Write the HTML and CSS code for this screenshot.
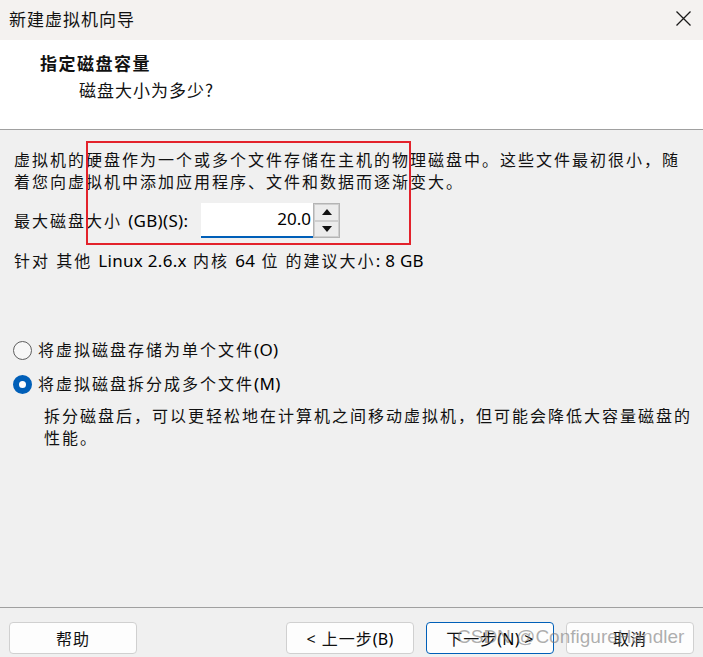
FILE: index.html
```html
<!DOCTYPE html>
<html lang="zh-CN">
<head>
<meta charset="utf-8">
<title>新建虚拟机向导</title>
<link rel="stylesheet" href="styles.css">
</head>
<body>
<div class="window">
  <div class="titlebar">
    <span class="title">新建虚拟机向导</span>
    <svg class="close" width="15" height="15" viewBox="0 0 15 15"><path d="M0.5 0.5 L14.5 14.5 M14.5 0.5 L0.5 14.5" stroke="#1a1a1a" stroke-width="1.3" fill="none"/></svg>
  </div>
  <div class="header">
    <div class="h-title">指定磁盘容量</div>
    <div class="h-sub">磁盘大小为多少?</div>
  </div>
  <div class="content">
    <p class="para">虚拟机的硬盘作为一个或多个文件存储在主机的物理磁盘中。这些文件最初很小，随着您向虚拟机中添加应用程序、文件和数据而逐渐变大。</p>
    <div class="size-row">
      <span class="size-label">最大磁盘大小 <span class="lat">(GB)(S):</span></span>
      <div class="spin">
        <div class="spin-input">20.0</div>
        <div class="spin-btns">
          <div class="spin-btn"><svg width="10" height="6" viewBox="0 0 10 6"><path d="M0 6 L5 0 L10 6 Z" fill="#111"/></svg></div>
          <div class="spin-btn"><svg width="10" height="6" viewBox="0 0 10 6"><path d="M0 0 L5 6 L10 0 Z" fill="#111"/></svg></div>
        </div>
      </div>
    </div>
    <p class="rec">针对 其他 <span class="lat">Linux 2.6.x</span> 内核 <span class="lat">64</span> 位 的建议大小<span class="lat">: 8 GB</span></p>
    <div class="radios">
      <label class="radio-row"><span class="radio"></span><span>将虚拟磁盘存储为单个文件<span class="lat">(O)</span></span></label>
      <label class="radio-row second"><span class="radio checked"></span><span>将虚拟磁盘拆分成多个文件<span class="lat">(M)</span></span></label>
      <p class="desc">拆分磁盘后，可以更轻松地在计算机之间移动虚拟机，但可能会降低大容量磁盘的性能。</p>
    </div>
    <div class="highlight"></div>
  </div>
  <div class="footer">
    <button class="btn">帮助</button>
    <div class="right-btns">
      <button class="btn">&lt; 上一步<span class="lat">(B)</span></button>
      <button class="btn primary">下一步<span class="lat">(N) &gt;</span></button>
      <button class="btn">取消</button>
    </div>
    <div class="watermark">CSDN @ConfigureHandler</div>
  </div>
</div>
</body>
</html>
```
FILE: styles.css
```css
* { box-sizing: border-box; }
html, body { margin: 0; padding: 0; }
body {
  font-family: "Noto Sans", "Noto Sans CJK SC", sans-serif;
  color: #111;
  background: #f0f0f0;
}
.window {
  width: 703px;
  height: 657px;
  display: flex;
  flex-direction: column;
  position: relative;
  overflow: hidden;
}
.titlebar {
  height: 40px;
  background: #f4f2f0;
  display: flex;
  align-items: center;
  justify-content: space-between;
  padding: 0 12px 4px 9px;
}
.title {
  font-family: "Noto Sans CJK SC", sans-serif;
  font-size: 17px;
  letter-spacing: 1px;
  color: #111;
}
.close { display: block; margin-top: 1px; }
.header {
  height: 90px;
  background: #fff;
  border-bottom: 1px solid #a0a0a0;
  padding: 12px 0 0 40px;
}
.h-title {
  font-family: "Noto Sans CJK SC", sans-serif;
  font-weight: bold;
  font-size: 17px;
  letter-spacing: 1.5px;
  line-height: 22px;
}
.h-sub {
  font-family: "Noto Sans CJK SC", sans-serif;
  font-size: 17px;
  letter-spacing: 1px;
  line-height: 22px;
  margin: 5px 0 0 39px;
}
.content {
  flex: 1;
  padding: 19px 8px 0 14px;
  position: relative;
  font-size: 16px;
  letter-spacing: 2px;
  line-height: 22px;
}
.lat { letter-spacing: 0.3px; font-size: 17px; color: #000; }
.para { margin: 0; }
.size-row {
  display: flex;
  align-items: center;
  margin-top: 10px;
  height: 35px;
}
.size-label { width: 187px; white-space: nowrap; }
.spin { display: flex; height: 35px; }
.spin-input {
  width: 112px;
  height: 35px;
  background: #fff;
  border-bottom: 2px solid #005fb8;
  text-align: right;
  padding-right: 2px;
  font-size: 17px;
  letter-spacing: 0;
  line-height: 31px;
  color: #000;
}
.spin-btns {
  width: 27px;
  height: 35px;
  border: 1px solid #b4b4b4;
  display: flex;
  flex-direction: column;
  background: #f0f0f0;
}
.spin-btn {
  flex: 1;
  border: 1px solid #cfcfcf;
  background: #ececec;
  display: flex;
  align-items: center;
  justify-content: center;
}
.rec { margin: 12px 0 0; }
.radios { margin-top: 67px; }
.radio-row {
  display: flex;
  align-items: center;
  height: 22px;
}
.radio-row.second { margin-top: 12px; }
.radio {
  width: 19px;
  height: 19px;
  border-radius: 50%;
  border: 1px solid #5e5e5e;
  background: #f7f7f7;
  margin: 0 6px 0 -1px;
  flex: none;
}
.radio.checked {
  border: 6px solid #005fb8;
  background: #fff;
}
.desc { margin: 10px 0 0 30px; }
.highlight {
  position: absolute;
  left: 86px;
  top: 11px;
  width: 325px;
  height: 104px;
  border: 2px solid #e3222b;
}
.footer {
  height: 50px;
  border-top: 1px solid #a0a0a0;
  padding: 14px 9px 3px 9px;
  display: flex;
  justify-content: space-between;
  position: relative;
}
.right-btns { display: flex; gap: 12px; }
.btn {
  width: 128px;
  height: 32px;
  border: 1px solid #d0d0d0;
  border-radius: 4px;
  background: #fdfdfd;
  font-family: "Noto Sans", "Noto Sans CJK SC", sans-serif;
  font-size: 16px;
  letter-spacing: 1px;
  color: #111;
  padding: 0;
}
.btn .lat { font-size: 16px; }
.btn.primary { border-color: #005fb8; }
.watermark {
  position: absolute;
  left: 457px;
  top: 18px;
  font-family: "Liberation Sans", Arial, sans-serif;
  font-size: 19px;
  color: rgba(120, 120, 120, 0.6);
  white-space: nowrap;
  pointer-events: none;
}
```
